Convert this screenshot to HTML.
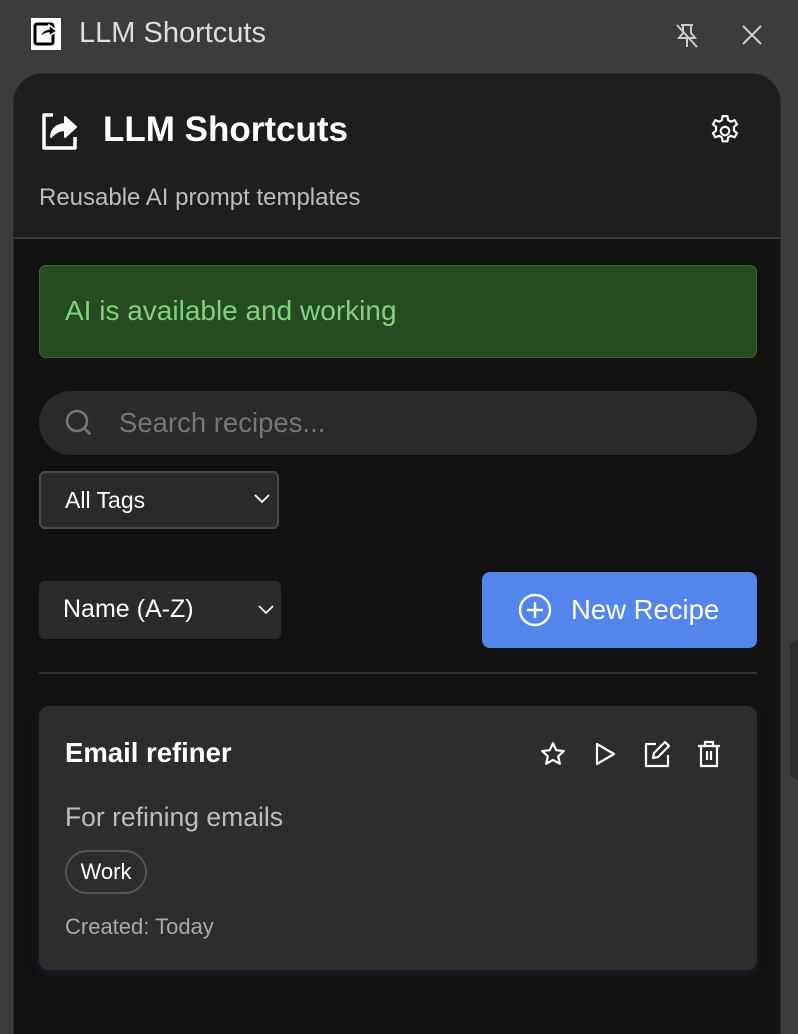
<!DOCTYPE html>
<html style="width:798px;height:1034px;overflow:hidden"><head><style>
*{box-sizing:border-box;margin:0;padding:0}
body{width:798px;height:1034px;background:#3c3c3c;font-family:"Liberation Sans",sans-serif;position:relative;overflow:hidden;color:#fff}
.abs{position:absolute}
.panel{left:13px;top:73px;width:768px;height:1000px;border-radius:30px;background:#121212;overflow:hidden;border:1px solid #2a2a2a}
.hdr{left:0;top:0;width:768px;height:165px;background:#1e1e1e;border-bottom:2px solid #3a3a3a}
svg{position:absolute;overflow:visible}
</style></head><body>
<svg style="left:31px;top:18px" width="30" height="32" viewBox="0 0 30 32"><rect x="0" y="0" width="30" height="32" fill="#fff"/><rect x="4" y="6" width="18" height="20" rx="2" fill="none" stroke="#000" stroke-width="3"/><path d="M9 20 Q10 12 18 11 L18 7 L26 13 L18 18 L18 15 Q13 15 9 20Z" fill="#000" stroke="#fff" stroke-width="1.5"/></svg>
<div class="abs" style="left:79px;top:17px;font-size:29px;color:#dedede">LLM Shortcuts</div>
<svg style="left:674px;top:22px" width="26" height="26" viewBox="0 0 26 26" fill="none" stroke="#ccc" stroke-width="2"><path d="M7 3h12M9 3v8l-4 5h16l-4-5V3M13 16v9M3 3l20 22"/></svg>
<svg style="left:741px;top:24px" width="22" height="22" viewBox="0 0 22 22" stroke="#ccc" stroke-width="2"><path d="M2 2l18 18M20 2L2 20"/></svg>
<div class="abs panel">
 <div class="abs hdr">
  <svg style="left:25px;top:37px" width="40" height="40" viewBox="0 0 40 40" fill="none" stroke="#fff" stroke-width="3.5" stroke-linejoin="round"><path d="M14 4H5v33h31V26"/><path d="M12 26Q13 14 26 13V6l11 10-11 10v-7Q18 19 12 26Z" fill="#fff" stroke-width="2"/></svg>
  <div class="abs" style="left:89px;top:36px;font-size:35px;font-weight:bold">LLM Shortcuts</div>
  <svg style="left:694px;top:40px" width="34" height="34" viewBox="0 0 24 24" fill="none" stroke="#fff" stroke-width="1.5"><circle cx="12" cy="12" r="3"/><path d="M10.3 1.5h3.4l.5 2.8 1.9 1.1 2.7-1 1.7 2.9-2.2 1.8v2.6l2.2 1.8-1.7 2.9-2.7-1-1.9 1.1-.5 2.8h-3.4l-.5-2.8-1.9-1.1-2.7 1-1.7-2.9 2.2-1.8V9.1L3.5 7.3l1.7-2.9 2.7 1 1.9-1.1z"/></svg>
  <div class="abs" style="left:25px;top:110px;font-size:24px;color:#bdbdbd">Reusable AI prompt templates</div>
 </div>
 <div class="abs" style="left:25px;top:191px;width:718px;height:93px;background:#284a22;border:1px solid #3c6a32;border-radius:7px"></div>
 <div class="abs" style="left:51px;top:221px;font-size:28px;color:#7fd67a">AI is available and working</div>
 <div class="abs" style="left:25px;top:317px;width:718px;height:64px;background:#2a2a2a;border-radius:32px"></div>
 <svg style="left:51px;top:335px" width="28" height="28" viewBox="0 0 28 28" fill="none" stroke="#777" stroke-width="2.5"><circle cx="12" cy="12" r="10"/><path d="M19.5 19.5l6 6"/></svg>
 <div class="abs" style="left:105px;top:333px;font-size:27.5px;color:#777">Search recipes...</div>
 <div class="abs" style="left:25px;top:397px;width:240px;height:58px;background:#2a2a2a;border:2px solid #4a4a4a;border-radius:6px"></div>
 <div class="abs" style="left:51px;top:413px;font-size:23px">All Tags</div>
 <svg style="left:240px;top:420px" width="16" height="10" viewBox="0 0 16 10" fill="none" stroke="#fff" stroke-width="1.8"><path d="M1 1l7 7 7-7"/></svg>
 <div class="abs" style="left:25px;top:507px;width:242px;height:58px;background:#2a2a2a;border-radius:6px"></div>
 <div class="abs" style="left:49px;top:521px;font-size:25px">Name (A-Z)</div>
 <svg style="left:244px;top:531px" width="16" height="10" viewBox="0 0 16 10" fill="none" stroke="#fff" stroke-width="1.8"><path d="M1 1l7 7 7-7"/></svg>
 <div class="abs" style="left:468px;top:498px;width:275px;height:76px;background:#5286ea;border-radius:8px"></div>
 <svg style="left:504px;top:519px" width="34" height="34" viewBox="0 0 34 34" fill="none" stroke="#fff" stroke-width="2.4"><circle cx="17" cy="17" r="15"/><path d="M17 9v16M9 17h16"/></svg>
 <div class="abs" style="left:557px;top:520px;font-size:27.5px">New Recipe</div>
 <div class="abs" style="left:25px;top:598px;width:718px;height:2px;background:#333"></div>
 <div class="abs" style="left:25px;top:632px;width:718px;height:264px;background:#2d2d2d;border-radius:10px;box-shadow:0 4px 8px rgba(30,40,60,.6)"></div>
 <div class="abs" style="left:51px;top:663px;font-size:27.5px;font-weight:bold">Email refiner</div>
 <svg style="left:526px;top:667px" width="26" height="26" viewBox="0 0 24 24" fill="none" stroke="#fff" stroke-width="2" stroke-linejoin="round"><path d="M12 2l3 6.5 7 .8-5.2 4.8 1.5 7L12 17.5 5.7 21l1.5-7L2 9.3l7-.8z"/></svg>
 <svg style="left:580px;top:668px" width="22" height="24" viewBox="0 0 22 24" fill="none" stroke="#fff" stroke-width="2.2" stroke-linejoin="round"><path d="M3 2l17 10L3 22z"/></svg>
 <svg style="left:629px;top:666px" width="28" height="28" viewBox="0 0 28 28" fill="none" stroke="#fff" stroke-width="2.2" stroke-linejoin="round"><path d="M13 4H3v22h22V15"/><path d="M22 2l4 4-11 11-5 1 1-5z"/></svg>
 <svg style="left:683px;top:666px" width="24" height="28" viewBox="0 0 24 28" fill="none" stroke="#fff" stroke-width="2.2"><path d="M1 6h22M8 6V2h8v4M4 6v20h16V6M10 11v9M14 11v9"/></svg>
 <div class="abs" style="left:51px;top:728px;font-size:26.5px;color:#bdbdbd">For refining emails</div>
 <div class="abs" style="left:51px;top:776px;width:82px;height:44px;border:2px solid #555;border-radius:22px;font-size:22px;line-height:40px;text-align:center">Work</div>
 <div class="abs" style="left:51px;top:840px;font-size:22px;color:#aaa">Created: Today</div>
</div>
<div class="abs" style="left:790px;top:640px;width:8px;height:140px;background:#2c2c2c;border-radius:8px 0 0 8px"></div>
</body></html>
